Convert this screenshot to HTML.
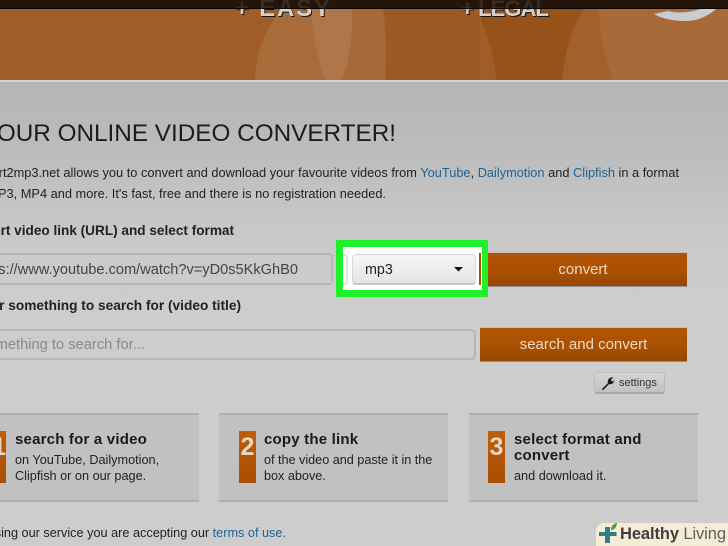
<!DOCTYPE html>
<html><head><meta charset="utf-8">
<style>
html,body{margin:0;padding:0}
body{width:728px;height:546px;overflow:hidden;position:relative;background:#cdcdcd;font-family:"Liberation Sans",sans-serif;color:#1c1c1c}
#w{position:absolute;left:0;top:0;width:728px;height:546px;overflow:hidden}
.a{position:absolute;white-space:nowrap}
.r{position:absolute;white-space:nowrap}
a{color:#1f6393;text-decoration:none}
.btn{position:absolute;left:480px;width:207px;height:33px;background:linear-gradient(#b25503,#a85002 60%,#964700);box-shadow:0 1px 0 #8f8f8f,0 -1px 0 #bdbdbd;color:#eed9c4;font-size:15px;line-height:34px;text-align:center}
.box{position:absolute;top:413px;height:89px;background:#c1c1c1;border-top:2px solid #afafaf;border-bottom:2px solid #afafaf;box-sizing:border-box;width:229px}
.num{position:absolute;top:431px;width:17px;height:52px;background:linear-gradient(#c25c08,#a84f02);color:#e6d8c8;font-weight:bold;font-size:25px;line-height:33px;text-align:center;overflow:hidden}
.h{position:absolute;font-weight:bold;font-size:15px;line-height:16px;letter-spacing:.2px;white-space:nowrap;color:#1a1a1a}
.t{position:absolute;font-size:12.7px;line-height:16px;white-space:nowrap;color:#222}
</style></head><body><div id="w">
<div class="a" style="left:0;top:0;width:728px;height:546px;background:linear-gradient(#b4b5b4 82px,#bcbcbc 150px,#c8c8c8 230px,#cdcdcd 300px)"></div>

<svg class="a" style="left:0;top:0" width="728" height="82" viewBox="0 0 728 82">
<rect width="728" height="80" fill="#a05d27"/>
<path d="M385 0H480V80H385Z" fill="#9e5a25"/>
<path d="M478 9C488 40 496 60 496 80L562 80C565 50 572 25 585 9Z" fill="#97521a"/>
<path d="M585 9C572 25 565 50 562 80H728V9Z" fill="#a2602c"/>
<path d="M599 9C600 40 606 60 613 80H728V9Z" fill="#a96a3a"/>
<path d="M255 80C256 50 266 25 285 9H352C353 35 350 60 341 80Z" fill="#fff" opacity=".09"/>
<path d="M311 9C312 35 318 60 325 80H385C387 55 386 30 383 9Z" fill="#fff" opacity=".08"/>
<rect y="0" width="728" height="8" fill="#241509"/>
<rect y="8" width="728" height="1" fill="#050302"/>
<rect y="80" width="728" height="2" fill="#d9d5cc"/>
<path d="M654 14C662 19 675 21 686 21C698 21 708 16 716 9H700C692 12 678 14 668 11Z" fill="#c9cdd0"/>
</svg>

<svg class="a" style="left:0;top:0" width="728" height="30">
<g font-family="Liberation Sans" font-weight="bold" font-size="24">
<clipPath id="c"><rect y="-10" width="728" height="28"/></clipPath>
<g clip-path="url(#c)">
<text x="235" y="16" fill="#1a1208" textLength="95" transform="translate(1 1)">+ EASY</text>
<text x="235" y="16" fill="#d0d2d4" textLength="95">+ EASY</text>
<text x="461" y="16" fill="#1a1208" textLength="88" font-size="22" transform="translate(1 1)">+ LEGAL</text>
<text x="461" y="16" fill="#d0d2d4" textLength="88" font-size="22">+ LEGAL</text>
</g></g>
</svg>
<div class="a" style="left:0;top:0;width:728px;height:8px;background:rgba(36,21,9,.88)"></div>
<div class="a" style="left:0;top:8px;width:728px;height:1px;background:#050302"></div>

<div class="r" style="right:332px;top:120px;font-size:24.3px;line-height:28px;color:#1c1c1c">YOUR ONLINE VIDEO CONVERTER!</div>
<div class="r" style="right:49px;top:165px;font-size:12.8px;line-height:16px;color:#222">Convert2mp3.net allows you to convert and download your favourite videos from <a>YouTube</a>, <a>Dailymotion</a> and <a>Clipfish</a> in a format</div>
<div class="r" style="right:342px;top:186px;font-size:12.8px;line-height:16px;color:#222">such as MP3, MP4 and more. It's fast, free and there is no registration needed.</div>
<div class="r" style="right:494px;top:223px;font-size:13.6px;line-height:16px;font-weight:bold;color:#222">Insert video link (URL) and select format</div>

<div class="a" style="left:-10px;top:253px;width:343px;height:32px;box-sizing:border-box;border:2px solid #b6b6b6;border-radius:4px"></div>
<div class="r" style="right:430px;top:262px;font-size:14.6px;line-height:16px;color:#444">https://www.youtube.com/watch?v=yD0s5KkGhB0</div>

<div class="btn" style="top:253px;left:479px;width:208px">convert</div>
<div class="a" style="left:336px;top:240px;width:152px;height:57px;box-sizing:border-box;border:7px solid #1ff02a;border-right-width:6px;background:#fff"></div>
<div class="a" style="left:479px;top:253px;width:2px;height:32px;background:#a54e05"></div>
<div class="a" style="left:343px;top:254px;width:5px;height:31px;border:solid #e0e0e0;border-width:2px 2px 2px 0;border-radius:0 4px 4px 0;box-sizing:border-box"></div>
<div class="a" style="left:352px;top:254px;width:124px;height:31px;box-sizing:border-box;background:linear-gradient(#f6f6f6,#e4e4e4);border:1px solid #d8d8d8;border-bottom:2px solid #c6c6c6;border-radius:4px"></div>
<div class="a" style="left:365px;top:262px;font-size:14.3px;line-height:16px;color:#222">mp3</div>
<svg class="a" style="left:454px;top:267px" width="10" height="5"><path d="M0 0H9L4.500 4.500Z" fill="#111"/></svg>

<div class="r" style="right:487px;top:298px;font-size:13.7px;line-height:16px;font-weight:bold;color:#222">Or enter something to search for (video title)</div>

<div class="a" style="left:-10px;top:329px;width:486px;height:31px;box-sizing:border-box;border:2px solid #b6b6b6;border-radius:5px"></div>
<div class="r" style="right:583px;top:337px;font-size:14.7px;line-height:16px;color:#8a8a8a">Enter something to search for...</div>
<div class="btn" style="top:328px">search and convert</div>

<div class="a" style="left:594px;top:372px;width:71px;height:22px;box-sizing:border-box;background:linear-gradient(#d4d4d4,#c2c2c2);border:1px solid #bdbdbd;border-bottom:2px solid #a9a9a9;border-radius:3px"></div>
<svg class="a" style="left:601px;top:376px" width="14" height="14" viewBox="0 0 14 14"><path d="M1 13L7 7C6 4 8 1 12.500 1.200L10 3.800L10.800 5.200L12.600 5.400L13.500 3C13.500 6.500 11 9 8.200 8L2.800 13.500C2 14 .5 13.800 1 13Z" fill="#1a1a1a"/></svg>
<div class="a" style="left:619px;top:375px;font-size:11px;line-height:16px;color:#333">settings</div>

<div class="box" style="left:-30px"></div>
<div class="box" style="left:219px"></div>
<div class="box" style="left:469px"></div>

<div class="num" style="left:-11px;text-align:right">1</div>
<div class="num" style="left:239px">2</div>
<div class="num" style="left:488px">3</div>

<div class="h" style="left:15px;top:432px">search for a video</div>
<div class="t" style="left:15px;top:452px">on YouTube, Dailymotion,<br>Clipfish or on our page.</div>
<div class="h" style="left:264px;top:432px">copy the link</div>
<div class="t" style="left:264px;top:452px;letter-spacing:-.03px">of the video and paste it in the<br>box above.</div>
<div class="h" style="left:514px;top:432px">select format and<br>convert</div>
<div class="t" style="left:514px;top:468px">and download it.</div>

<div class="r" style="right:442px;top:525px;font-size:12.7px;line-height:16px;color:#222">By using our service you are accepting our <a>terms of use.</a></div>

<div class="a" style="left:596px;top:523px;width:132px;height:23px;background:#f5ecd6;border-radius:8px 0 0 0"></div>
<svg class="a" style="left:598px;top:522px" width="22" height="24" viewBox="0 0 22 24"><path d="M7 5H12V10H18.500V14H12V21H7V14H1V10H7Z" fill="#2f7f80"/><path d="M13 8C13 4 15 2 19 1C19 4 17 8 13 8Z" fill="#5c9a3a"/></svg>
<div class="a" style="left:620px;top:524px;font-size:16.5px;line-height:20px;color:#4a4a4a;letter-spacing:-.1px"><b style="color:#3f3f3f">Healthy</b> <span style="color:#5f5f5f">Living</span></div>
</div></body></html>
